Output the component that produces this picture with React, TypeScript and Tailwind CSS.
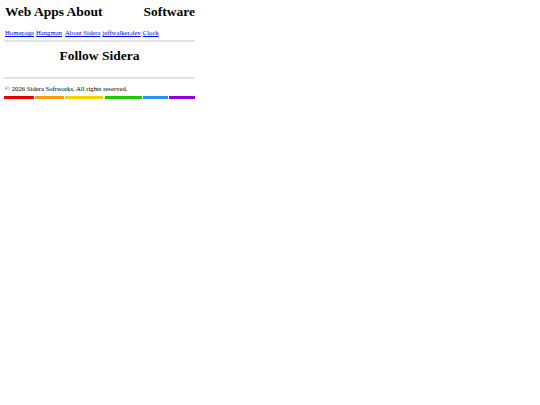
const LINKS = ["Homepage", "Hangman", "About Sidera", "jeffwalker.dev", "Clock"];

const BARS = [
  { color: "bg-[#e60000]", width: "w-[30px]" },
  { color: "bg-[#f5a000]", width: "w-[29px]" },
  { color: "bg-[#f5d000]", width: "w-[38px]" },
  { color: "bg-[#1ec800]", width: "w-[37px]" },
  { color: "bg-[#2a8ff0]", width: "w-[25px]" },
  { color: "bg-[#8a00e6]", width: "w-[26px]" },
];

export default function App() {
  return (
    <div className="min-h-[405px] bg-white text-black" style={{ fontFamily: '"Liberation Serif", serif' }}>
      <div className="ml-[4px] w-[191px] pt-[4px]">
        <header className="flex justify-between text-[13.5px] font-bold leading-[16px]">
          <span className="pl-[1px]">Web Apps About</span>
          <span>Software</span>
        </header>

        <nav className="mt-[8px] flex pl-[1px] text-[6.7px] leading-[9px]">
          {LINKS.map((label, i) => (
            <a key={label} href="#" className={`text-[#0000ee] underline ${i === 2 ? "ml-[3px]" : i > 0 ? "ml-[2px]" : ""}`}>
              {label}
            </a>
          ))}
        </nav>

        <hr className="mt-[3px] border-t-2 border-[#e3e3e3]" />

        <h2 className="mt-[6px] text-center text-[13.5px] font-bold leading-[16px]">Follow Sidera</h2>

        <hr className="mt-[13px] border-t-2 border-[#e3e3e3]" />

        <footer className="mt-[5px] pl-[1px] text-[6.7px] leading-[9px]">© 2026 Sidera Softworks. All rights reserved.</footer>

        <div className="mt-[3px] flex justify-between">
          {BARS.map((bar) => (
            <div key={bar.color} className={`h-[3px] ${bar.width} ${bar.color}`} />
          ))}
        </div>
      </div>
    </div>
  );
}
